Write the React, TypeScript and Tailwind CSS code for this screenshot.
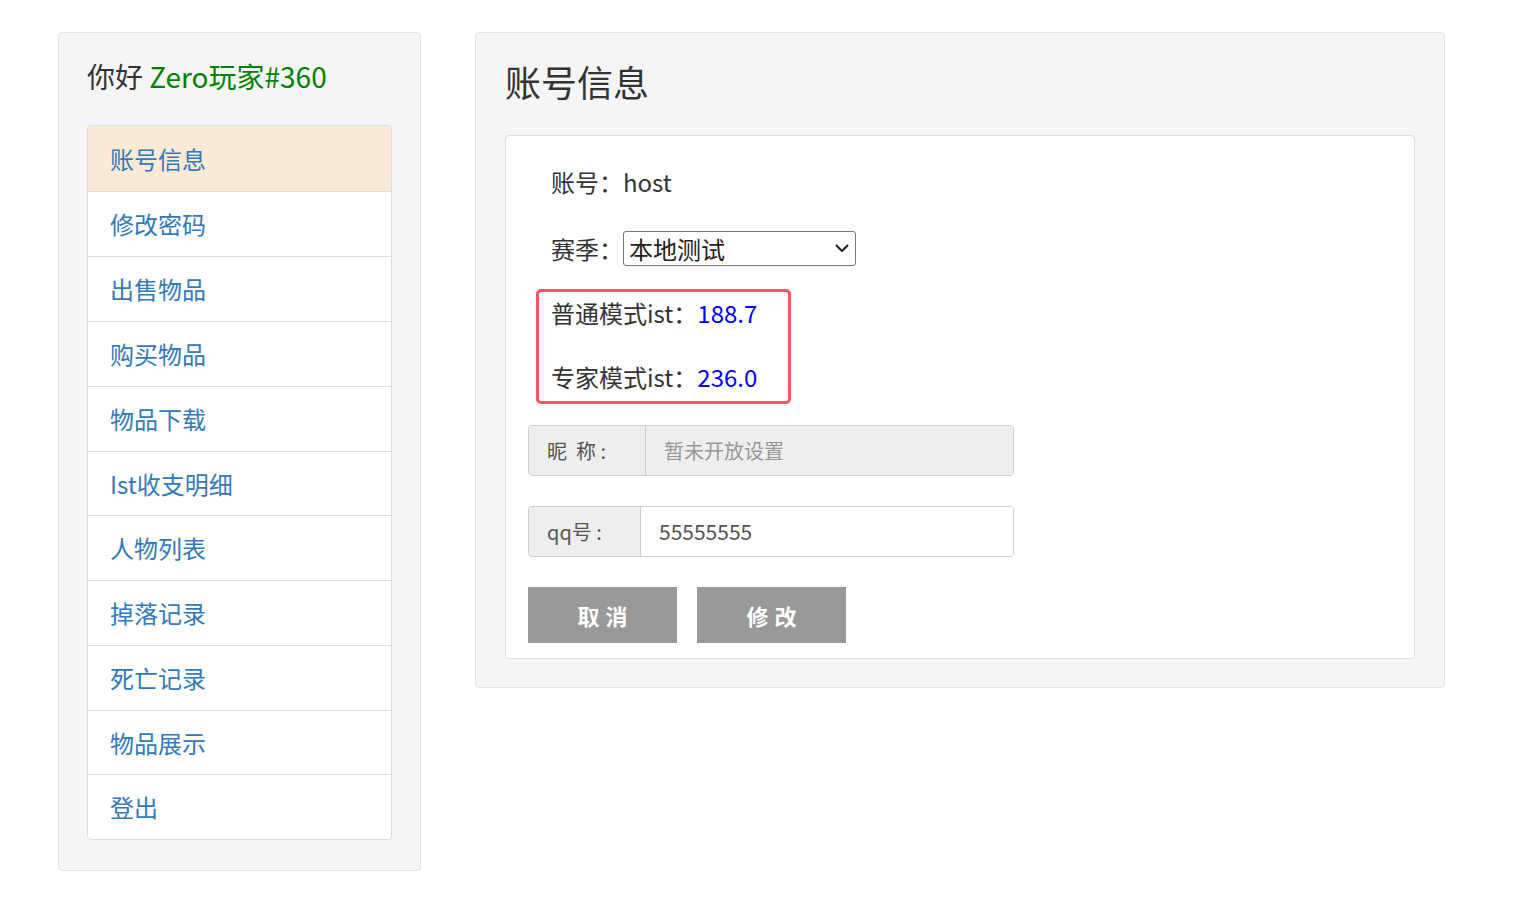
import React from "react";

const menu = [
  "账号信息",
  "修改密码",
  "出售物品",
  "购买物品",
  "物品下载",
  "Ist收支明细",
  "人物列表",
  "掉落记录",
  "死亡记录",
  "物品展示",
  "登出",
];

export default function App() {
  return (
    <div
      className="min-h-[911px] w-[1524px] bg-white text-[#333]"
      style={{ fontFamily: '"Noto Sans CJK SC", "Noto Sans", sans-serif' }}
    >
      <div className="flex items-start gap-[54px] pl-[58px] pt-[32px]">
        {/* Sidebar */}
        <div className="w-[363px] rounded-[4px] border border-[#e3e3e3] bg-[#f5f5f5] px-[28px] pt-[23px] pb-[30px]">
          <div className="h-[40px] text-[28px] leading-[40px] text-[#333]">
            你好 <span className="text-[#008000]">Zero玩家#360</span>
          </div>
          <div className="mt-[29px] overflow-hidden rounded-[4px] border border-[#ddd] bg-white">
            {menu.map((m, i) => (
              <div
                key={m}
                className={`flex items-center pl-[22px] text-[24px] leading-[30px] text-[#337ab7] ${
                  i === 5 || i === 9 ? "h-[64px]" : "h-[65px]"
                } ${i > 0 ? "border-t border-[#ddd]" : ""} ${i === 0 ? "bg-[#faead6]" : "bg-white"}`}
              >
                <span>{m}</span>
              </div>
            ))}
          </div>
        </div>

        {/* Main */}
        <div className="w-[970px] rounded-[4px] border border-[#e3e3e3] bg-[#f5f5f5] px-[29px] pt-[26px] pb-[28px]">
          <div className="h-[46px] text-[36px] leading-[44px] text-[#333]">账号信息</div>
          <div className="mt-[30px] rounded-[4px] border border-[#ddd] bg-white px-[22px] pt-[28px] pb-[15px]">
            <div className="ml-[23px] h-[37px] text-[24px] leading-[36px]">账号：host</div>
            <div className="ml-[23px] mt-[30px] flex h-[35px] items-center text-[24px]">
              <span>赛季：</span>
              <div className="relative h-[35px] w-[233px]">
                <select
                  className="h-[35px] w-[233px] appearance-none rounded-[3px] border border-[#767676] bg-white pl-[5px] text-[24px] leading-[33px] text-[#222]"
                  defaultValue="本地测试"
                >
                  <option>本地测试</option>
                </select>
                <svg
                  className="pointer-events-none absolute right-[7px] top-[13px]"
                  width="14"
                  height="9"
                  viewBox="0 0 14 9"
                  fill="none"
                >
                  <path d="M1.5 1.5 L7 7 L12.5 1.5" stroke="#222" strokeWidth="2" strokeLinecap="round" strokeLinejoin="round" />
                </svg>
              </div>
            </div>
            <div className="ml-[8px] mt-[23px] w-[255px] rounded-[5px] border-[3px] border-[#ff5264] pl-[12px] pt-[3px] pb-[6px]">
              <div className="h-[36px] text-[24px] leading-[36px]">
                普通模式ist：<span className="text-[#0000ff]">188.7</span>
              </div>
              <div className="mt-[28px] h-[36px] text-[24px] leading-[36px]">
                专家模式ist：<span className="text-[#0000ff]">236.0</span>
              </div>
            </div>

            <div className="mt-[21px] flex h-[51px] w-[486px] overflow-hidden rounded-[4px] border border-[#ccc] text-[20px]">
              <div className="flex w-[117px] shrink-0 items-center border-r border-[#ccc] bg-[#eee] pl-[18px] text-[#555]">
                昵&nbsp;&nbsp;称&nbsp;:
              </div>
              <div className="flex flex-1 items-center bg-[#eee] pl-[18px] text-[#999]">暂未开放设置</div>
            </div>

            <div className="mt-[30px] flex h-[51px] w-[486px] overflow-hidden rounded-[4px] border border-[#ccc] text-[20px]">
              <div className="flex w-[112px] shrink-0 items-center border-r border-[#ccc] bg-[#eee] pl-[18px] text-[#555]">
                qq号&nbsp;:
              </div>
              <div className="flex flex-1 items-center bg-white pl-[18px] text-[21px] text-[#555]">55555555</div>
            </div>

            <div className="mt-[30px] flex gap-[20px]">
              <button className="flex h-[56px] w-[149px] items-center justify-center bg-[#999] pl-[6px] text-[22px] font-bold tracking-[6px] text-white">
                取消
              </button>
              <button className="flex h-[56px] w-[149px] items-center justify-center bg-[#999] pl-[6px] text-[22px] font-bold tracking-[6px] text-white">
                修改
              </button>
            </div>
          </div>
        </div>
      </div>
    </div>
  );
}
